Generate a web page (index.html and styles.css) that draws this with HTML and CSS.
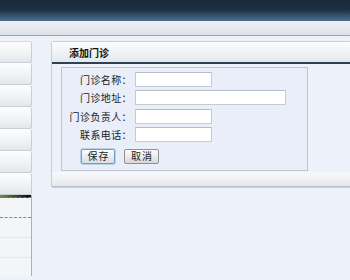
FILE: index.html
```html
<!DOCTYPE html>
<html>
<head>
<meta charset="utf-8">
<link rel="stylesheet" href="styles.css">
</head>
<body>
<div class="top"></div>
<div class="bar"></div>
<div class="main">
  <aside class="side">
    <div class="menu">
      <div class="item"></div>
      <div class="item"></div>
      <div class="item"></div>
      <div class="item"></div>
      <div class="item"></div>
      <div class="item"></div>
      <div class="item"></div>
    </div>
    <div class="sub">
      <div class="sub-line"></div>
      <div class="sub-row dashed"></div>
      <div class="sub-row"></div>
      <div class="sub-row"></div>
    </div>
  </aside>
  <section class="panel">
    <div class="panel-head">添加门诊</div>
    <div class="panel-body">
      <div class="form">
        <label class="lbl">门诊名称：</label><input class="inp short" type="text">
        <label class="lbl">门诊地址：</label><input class="inp long" type="text">
        <label class="lbl">门诊负责人：</label><input class="inp short" type="text">
        <label class="lbl">联系电话：</label><input class="inp short" type="text">
        <div class="btns">
          <button class="btn save">保存</button>
          <button class="btn cancel">取消</button>
        </div>
      </div>
    </div>
    <div class="panel-foot"></div>
  </section>
</div>
</body>
</html>
```
FILE: styles.css
```css
html, body {
  margin: 0;
  padding: 0;
  width: 350px;
  height: 280px;
  overflow: hidden;
  background: #edf1f9;
  font-family: "Noto Sans CJK SC", "Noto Sans", sans-serif;
  font-size: 10px;
  color: #222;
}
.top {
  height: 21px;
  background: linear-gradient(#1b2a3c 0, #1e2f43 45%, #4d6f90 100%);
}
.bar {
  height: 14px;
  background: linear-gradient(#eef1f4, #dde2e6);
  border-bottom: 1px solid #9ca6ae;
}
.main {
  display: flex;
  align-items: flex-start;
  padding-top: 5px;
  width: 350px;
  overflow: hidden;
}
.side {
  width: 32px;
  flex: none;
}
.menu {
  display: flex;
  flex-direction: column;
}
.item {
  height: 21px;
  border: 1px solid #c8ced5;
  border-left: none;
  border-top: none;
  border-radius: 0 3px 3px 0;
  background: linear-gradient(#fdfdfe, #f1f3f6 55%, #e3e7eb);
}
.item:first-child {
  border-top: 1px solid #d6dbe1;
  height: 20px;
}
.sub {
  width: 31px;
  height: 81px;
  border-right: 1px solid #aab2bd;
  background: #f3f5f9;
}
.sub-line {
  height: 2px;
  background: linear-gradient(90deg, #6f8c46, #3d4f25 50%, #111 90%);
  border-bottom: 1px dashed #777;
}
.sub-row {
  height: 19px;
  border-bottom: 1px solid #e4e8ee;
}
.sub-row.dashed {
  border-bottom: 1px dashed #888;
}
.panel {
  margin-left: 19px;
  width: 320px;
  flex: none;
  border: 1px solid #c9cfd7;
  border-right: none;
  border-radius: 3px 0 0 3px;
  background: #edf1f9;
}
.panel-head {
  height: 20px;
  line-height: 21px;
  padding-left: 17px;
  font-weight: bold;
  color: #111;
  background: linear-gradient(#fbfcfd, #eef1f4 60%, #e4e8ec);
  border-bottom: 2px solid #2e4052;
}
.panel-body {
  padding: 3px 9px 0;
}
.form {
  width: 245px;
  height: 98px;
  border: 1px solid #bcc6d2;
  background: #e9eef8;
  display: grid;
  grid-template-columns: 70px auto;
  column-gap: 3px;
  row-gap: 3.5px;
  align-content: start;
  justify-items: start;
  padding-top: 3.5px;
}
.lbl {
  justify-self: end;
  align-self: center;
  line-height: 15px;
  letter-spacing: 0.4px;
  color: #222;
}
.inp {
  height: 15px;
  box-sizing: border-box;
  border: 1px solid #c4cbd5;
  border-top-color: #b5bdc8;
  background: #fff;
  margin: 0;
  padding: 0 2px;
  font-size: 10px;
}
.inp.short { width: 77px; }
.inp.long { width: 151px; }
.btns {
  grid-column: 1 / 3;
  display: flex;
  gap: 9px;
  padding-left: 19px;
  margin-top: 3px;
}
.btn {
  height: 15px;
  box-sizing: border-box;
  padding: 0 0 0 1px;
  font-family: "Noto Sans CJK SC", sans-serif;
  font-size: 10px;
  line-height: 12px;
  letter-spacing: 1px;
  color: #222;
  border-radius: 2px;
}
.save {
  width: 34px;
  border: 1px solid #6d9cc6;
  box-shadow: 0 0 0 1px #b9d3ea;
  background: linear-gradient(#fefefe, #e9edf2 50%, #d9dfe6);
}
.cancel {
  width: 35px;
  border: 1px solid #8c9096;
  background: linear-gradient(#fdfdfd, #ececec 50%, #d8d8d8);
}
.panel-foot {
  height: 14px;
  margin-top: 1px;
  background: linear-gradient(#f7f9fb, #eef1f4 60%, #e2e6ea);
  border-bottom: 1px solid #b8c0c9;
}
```
